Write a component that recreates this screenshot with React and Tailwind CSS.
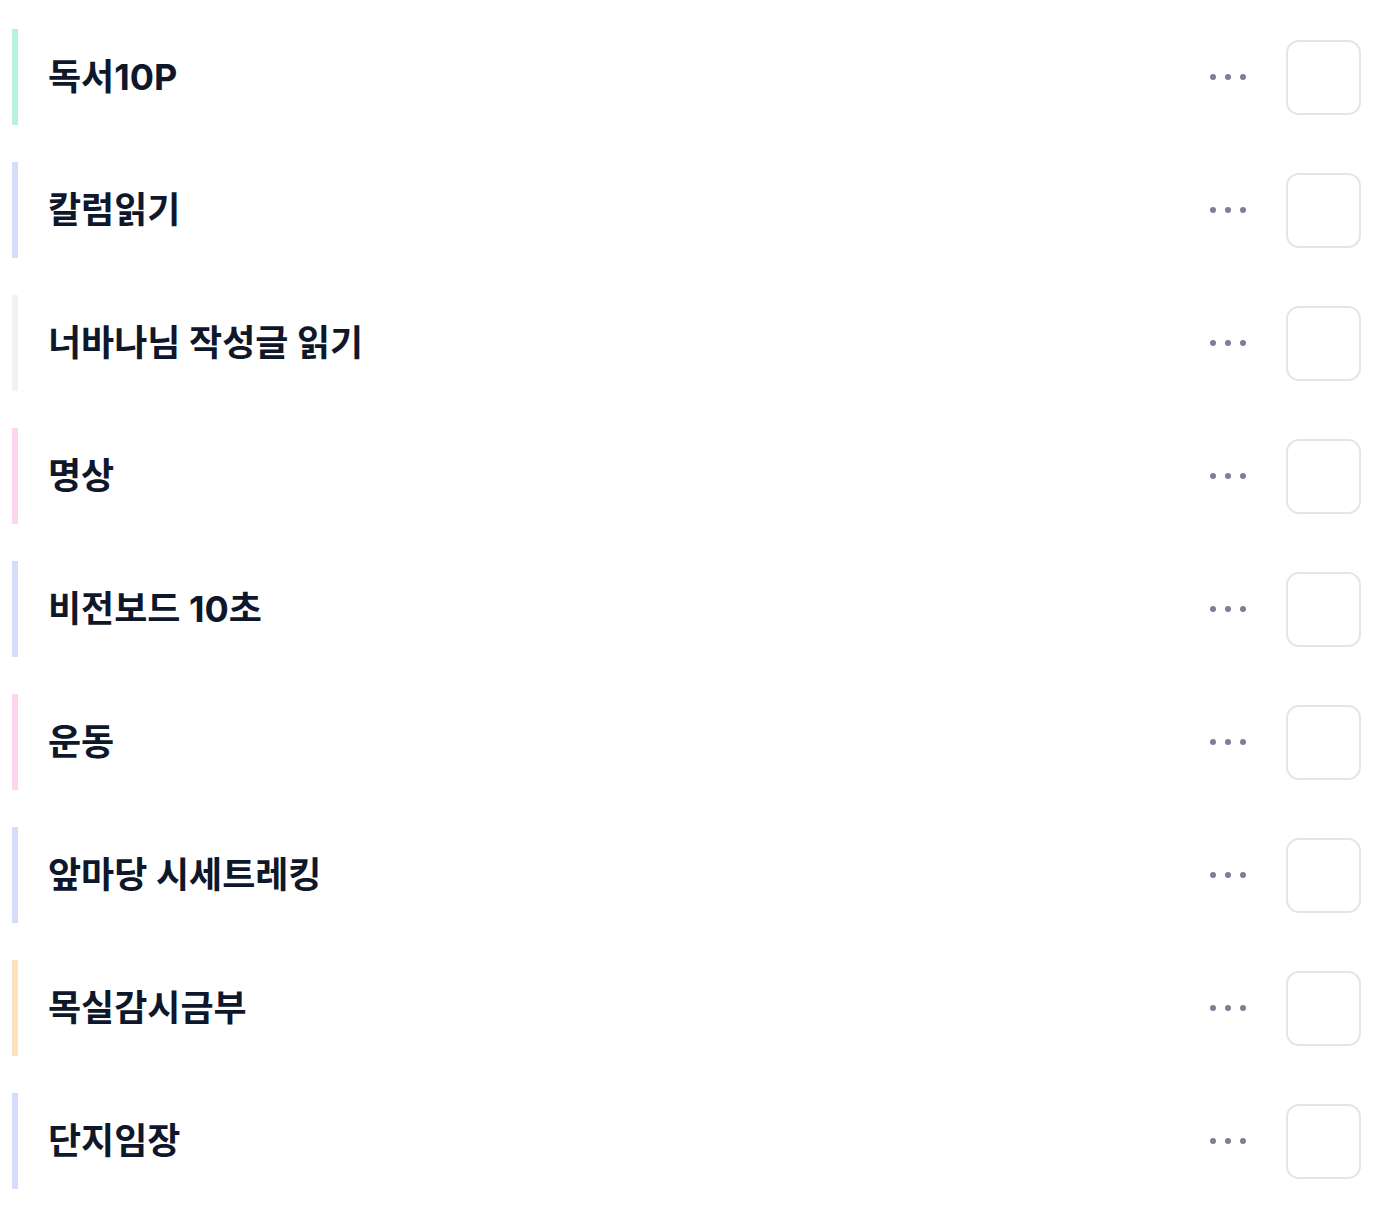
import React from "react";

const items = [
  { label: "독서10P", color: "bg-[#b8f2db]" },
  { label: "칼럼읽기", color: "bg-[#d5dcfc]" },
  { label: "너바나님 작성글 읽기", color: "bg-[#f1f2f4]" },
  { label: "명상", color: "bg-[#fdd5ee]" },
  { label: "비전보드 10초", color: "bg-[#d5dcfc]" },
  { label: "운동", color: "bg-[#fdd5ee]" },
  { label: "앞마당 시세트레킹", color: "bg-[#d5dcfc]" },
  { label: "목실감시금부", color: "bg-[#fde0bd]" },
  { label: "단지임장", color: "bg-[#d5dcfc]" },
];

export default function App() {
  return (
    <div
      className="w-[1391px] min-h-[1231px] bg-white pt-[29px] pl-[12px] pr-[30px] flex flex-col gap-[37px]"
      style={{ fontFamily: 'Inter, "Noto Sans CJK KR", "Noto Sans", sans-serif' }}
    >
      {items.map((it, i) => (
        <div key={i} className="flex items-center h-[96px]">
          <div className={`w-[6px] h-[96px] ${it.color}`} />
          <div className="ml-[30px] flex-1 text-[36px] font-bold text-[#0f172a] leading-none">
            {it.label}
          </div>
          <div className="flex items-center gap-[9px] mr-[40px]">
            <span className="w-[6px] h-[6px] rounded-full bg-[#7a8194]" />
            <span className="w-[6px] h-[6px] rounded-full bg-[#7a8194]" />
            <span className="w-[6px] h-[6px] rounded-full bg-[#7a8194]" />
          </div>
          <div className="w-[75px] h-[75px] rounded-[13px] border-2 border-[#e4e5ea] bg-white" />
        </div>
      ))}
    </div>
  );
}
